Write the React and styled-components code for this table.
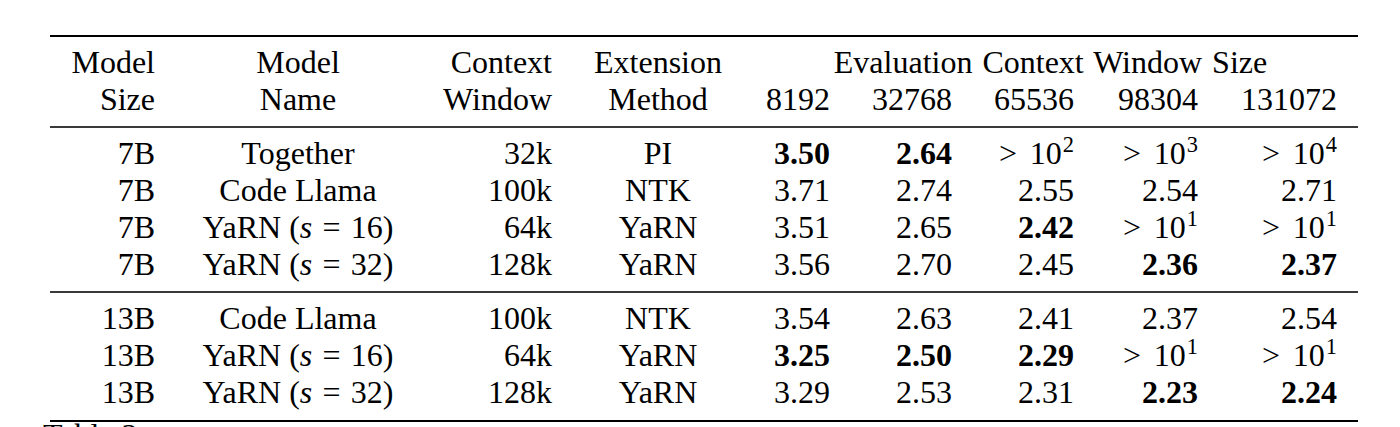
import React from "react";
import styled, { createGlobalStyle } from "styled-components";

const Global = createGlobalStyle`
  html, body {
    margin: 0;
    padding: 0;
    background: #ffffff;
  }
  body {
    font-family: "Liberation Serif", "Times New Roman", serif;
    color: #000;
    overflow: hidden;
  }
`;

const COLS = "105px 286px 111px 212px 66px 122px 122px 124px 139px 21px";

const Page = styled.div`
  padding: 35px 0 0 50px;
  width: 1308px;
  height: 392px;
  overflow: hidden;
`;

const Table = styled.div`
  border-top: 2px solid #000;
  border-bottom: 2px solid #000;
  font-size: 32px;
  line-height: 37px;
`;

const Section = styled.div`
  display: grid;
  grid-template-columns: ${COLS};
  padding: ${(p) => p.$pad};
  border-top: ${(p) => (p.$divider ? "2px solid #3a3a3a" : "none")};
`;

const Cell = styled.div`
  text-align: ${(p) => p.$align || "right"};
  white-space: nowrap;
  font-weight: ${(p) => (p.$bold ? 700 : 400)};
  grid-column: ${(p) => p.$span || "auto"};
  word-spacing: ${(p) => p.$wide || 0};
`;

const Var = styled.i`
  font-style: italic;
`;

const Eq = styled.span`
  margin: 0 0.32em;
`;

const Rel = styled.span`
  margin-right: 0.4em;
`;

const Sup = styled.span`
  font-size: 0.7em;
  line-height: 0;
  position: relative;
  top: -0.55em;
  margin-left: 1px;
`;

const Caption = styled.div`
  margin: 1px 0 0 -7px;
  font-size: 32px;
  line-height: 24px;
`;

const Big = ({ exp }) => (
  <>
    <Rel>&gt;</Rel>10<Sup>{exp}</Sup>
  </>
);

const Yarn = ({ s }) => (
  <>
    YaRN (<Var>s</Var>
    <Eq>=</Eq>
    {s})
  </>
);

const sections = [
  [
    ["7B", "Together", "32k", "PI", [["3.50", 1], ["2.64", 1], [<Big exp="2" />], [<Big exp="3" />], [<Big exp="4" />]]],
    ["7B", "Code Llama", "100k", "NTK", [["3.71"], ["2.74"], ["2.55"], ["2.54"], ["2.71"]]],
    ["7B", <Yarn s="16" />, "64k", "YaRN", [["3.51"], ["2.65"], ["2.42", 1], [<Big exp="1" />], [<Big exp="1" />]]],
    ["7B", <Yarn s="32" />, "128k", "YaRN", [["3.56"], ["2.70"], ["2.45"], ["2.36", 1], ["2.37", 1]]],
  ],
  [
    ["13B", "Code Llama", "100k", "NTK", [["3.54"], ["2.63"], ["2.41"], ["2.37"], ["2.54"]]],
    ["13B", <Yarn s="16" />, "64k", "YaRN", [["3.25", 1], ["2.50", 1], ["2.29", 1], [<Big exp="1" />], [<Big exp="1" />]]],
    ["13B", <Yarn s="32" />, "128k", "YaRN", [["3.29"], ["2.53"], ["2.31"], ["2.23", 1], ["2.24", 1]]],
  ],
];

const Row = ({ row }) => (
  <>
    <Cell>{row[0]}</Cell>
    <Cell $align="center">{row[1]}</Cell>
    <Cell>{row[2]}</Cell>
    <Cell $align="center">{row[3]}</Cell>
    {row[4].map(([v, b], i) => (
      <Cell key={i} $bold={!!b}>
        {v}
      </Cell>
    ))}
    <Cell />
  </>
);

export default function App() {
  return (
    <>
      <Global />
      <Page>
        <Table>
          <Section $pad="7px 0 8px">
            <Cell>Model</Cell>
            <Cell $align="center">Model</Cell>
            <Cell>Context</Cell>
            <Cell $align="center">Extension</Cell>
            <Cell $align="center" $span="5 / span 5" $wide="2px">
              Evaluation Context Window Size
            </Cell>
            <Cell />
            <Cell>Size</Cell>
            <Cell $align="center">Name</Cell>
            <Cell>Window</Cell>
            <Cell $align="center">Method</Cell>
            <Cell>8192</Cell>
            <Cell>32768</Cell>
            <Cell>65536</Cell>
            <Cell>98304</Cell>
            <Cell>131072</Cell>
            <Cell />
          </Section>
          <Section $divider $pad="7px 0 8px">
            {sections[0].map((r, i) => (
              <Row key={i} row={r} />
            ))}
          </Section>
          <Section $divider $pad="7px 0 9px">
            {sections[1].map((r, i) => (
              <Row key={i} row={r} />
            ))}
          </Section>
        </Table>
        <Caption>Table 3:</Caption>
      </Page>
    </>
  );
}
